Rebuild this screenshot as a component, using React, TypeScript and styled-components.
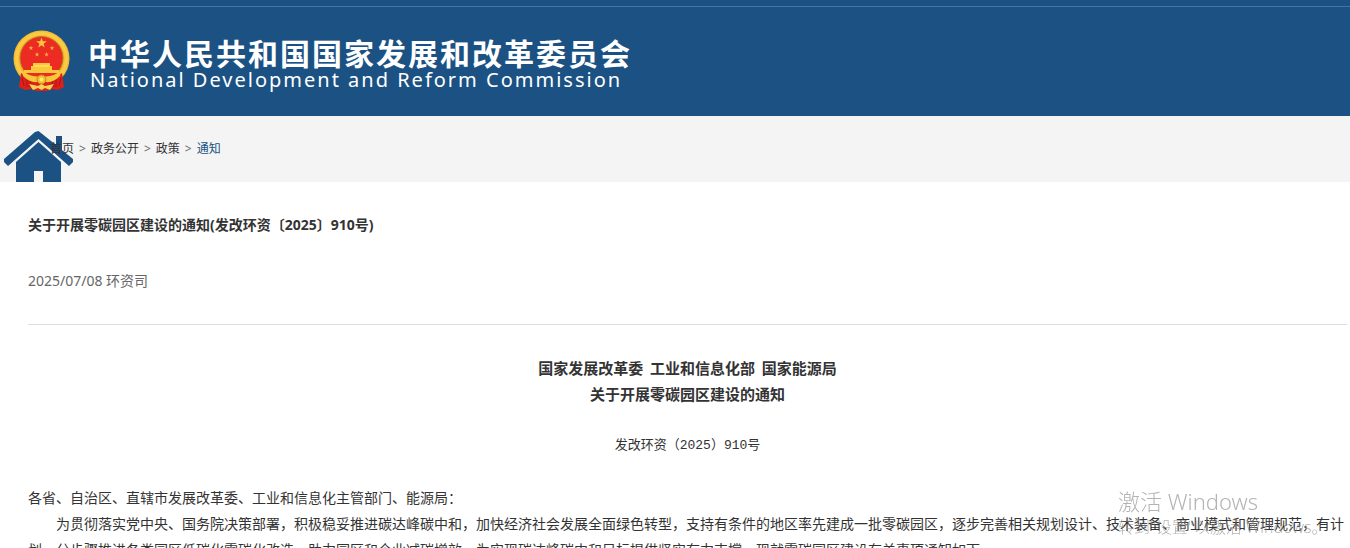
import React from "react";
import styled, { createGlobalStyle } from "styled-components";

const sans = `"Noto Sans", "Noto Sans CJK SC", sans-serif`;
const song = `"Noto Sans CJK SC", sans-serif`;

const GlobalStyle = createGlobalStyle`
  * { box-sizing: border-box; }
  body { margin: 0; background: #fff; color: #333; font-family: ${sans}; }
  h1, h2, p { margin: 0; }
`;

const Page = styled.div`
  overflow: hidden;
`;

const Header = styled.header`
  background: #1b5283;
  padding-top: 6px;
`;

const HeaderInner = styled.div`
  display: flex;
  align-items: flex-start;
  gap: 17px;
  height: 110px;
  padding: 23px 13px 0;
  border-top: 1px solid #45749e;
`;

const SiteName = styled.div`
  color: #fff;
  padding-top: 4px;
  white-space: nowrap;
`;

const ChineseName = styled.div`
  font: 700 30px/36px "Noto Sans CJK SC", sans-serif;
  letter-spacing: 2px;
`;

const EnglishName = styled.div`
  padding-left: 2px;
  font: 400 20px/20px "Noto Sans", sans-serif;
  letter-spacing: 2px;
`;

const Breadcrumb = styled.nav`
  position: relative;
  height: 66px;
  padding: 23px 0 0 50px;
  overflow: hidden;
  background: #f4f4f4;
  font-size: 12px;
  line-height: 20px;
`;

const HomeIcon = styled.svg`
  position: absolute;
  left: 4px;
  top: 15px;
`;

const Crumbs = styled.ol`
  position: relative;
  display: flex;
  gap: 5px;
  margin: 0;
  padding: 0;
  list-style: none;
`;

const Crumb = styled.li`
  display: flex;
  gap: 5px;
  color: #666;
  &:not(:last-child)::after { content: ">"; }
`;

const CrumbLink = styled.a<{ $current?: boolean }>`
  color: ${(p) => (p.$current ? "#1b5283" : "#333")};
  text-decoration: none;
`;

const Article = styled.main`
  padding: 31px 3px 0 28px;
`;

const Title = styled.h1`
  font-size: 14px;
  line-height: 24px;
  font-weight: 700;
`;

const Meta = styled.p`
  margin-top: 32px;
  padding-bottom: 31px;
  border-bottom: 1px solid #ddd;
  color: #666;
  font-size: 14px;
  line-height: 24px;
`;

const DocumentHead = styled.h2`
  margin-top: 30px;
  text-align: center;
  font: 700 15px/26px ${song};
`;

const DocumentNumber = styled.p`
  margin-top: 26px;
  text-align: center;
  font: 400 13px/26px "Liberation Mono", "Noto Sans CJK SC", monospace;
`;

const Paragraph = styled.p<{ $indent?: boolean }>`
  font: 400 14px/26px ${song};
  text-indent: ${(p) => (p.$indent ? "2em" : "0")};
`;

const Content = styled.div`
  margin-top: 25px;
`;

const Watermark = styled.div`
  position: fixed;
  right: 20px;
  bottom: 9px;
  width: 212px;
  color: rgba(140, 140, 140, 0.65);
  font-weight: 300;
  white-space: nowrap;
  pointer-events: none;
`;

const WatermarkTitle = styled.div`
  font-size: 22px;
  line-height: 28px;
`;

const WatermarkHint = styled.div`
  font-size: 16px;
  line-height: 24px;
`;

const star = (cx: number, cy: number, r: number) =>
  Array.from({ length: 10 }, (_, i) => {
    const a = (Math.PI * i) / 5 - Math.PI / 2;
    const d = i % 2 ? r * 0.4 : r;
    return `${cx + d * Math.cos(a)},${cy + d * Math.sin(a)}`;
  }).join(" ");

const Emblem = () => (
  <svg width="58" height="62" viewBox="0 0 58 62" role="img" aria-label="国徽">
    <circle cx="28.5" cy="28.5" r="28" fill="#f5bd34" />
    <circle cx="28.5" cy="28.5" r="25" fill="none" stroke="#fbcb45" strokeWidth="3" />
    <circle cx="28.5" cy="28" r="21.5" fill="#ec2c22" stroke="#b97b1c" />
    <polygon points={star(28.5, 13, 5.5)} fill="#f9c83c" />
    <polygon points={star(18, 18, 2.4)} fill="#f3b537" />
    <polygon points={star(39, 18, 2.4)} fill="#f3b537" />
    <polygon points={star(24, 24.5, 2.4)} fill="#f3b537" />
    <polygon points={star(33.5, 24.5, 2.4)} fill="#f3b537" />
    <path d="M20 33h17v3h2v4h7v3H11v-3h7v-4h2z" fill="#f9c83c" />
    <path d="M21 36h15" stroke="#fff06d" />
    <path d="M8 43 14 47h29l6-4 2 14-6 3-6-1-5 2H23l-5-2-6 1-6-3z" fill="#dd2019" />
    <path d="M14 49v8M18 51l-2 6M43 49v8M39 51l2 6M9 48l2 8M48 48l-2 8" stroke="#a91712" />
    <path d="M9 41q9 7 19.5 5Q39 48 48 41l-1 5q-7 7-14 6l-4.5-2-4.5 2q-7 1-14-6z" fill="#f6c63c" />
    <circle cx="28.5" cy="49.5" r="4.5" fill="#f4bd32" stroke="#c88520" />
    <circle cx="28.5" cy="49.5" r="2" fill="#ffe96a" />
    <path d="m16 54 9 2 3.5-2 3.5 2 9-2-4 6-5-2-3.5 2-3.5-2-5 2z" fill="#f8d253" />
  </svg>
);

const Home = () => (
  <HomeIcon width="70" height="54" viewBox="0 0 70 54" aria-hidden="true">
    <path d="M34.5 0 52 14V5h6v14l11 9v3l-4 4L34.5 8 4 35l-4-4v-3L31 1z" fill="#1b5283" />
    <path d="M12 31 34.5 11 57 31v23H39V40h-9v14H12z" fill="#1b5283" />
  </HomeIcon>
);

const crumbs = ["首页", "政务公开", "政策", "通知"];

export default function App() {
  return (
    <Page>
      <GlobalStyle />
      <Header>
        <HeaderInner>
          <Emblem />
          <SiteName>
            <ChineseName>中华人民共和国国家发展和改革委员会</ChineseName>
            <EnglishName>National Development and Reform Commission</EnglishName>
          </SiteName>
        </HeaderInner>
      </Header>
      <Breadcrumb aria-label="当前位置">
        <Home />
        <Crumbs>
          {crumbs.map((name, i) => (
            <Crumb key={name}>
              <CrumbLink href="#" $current={i === crumbs.length - 1}>{name}</CrumbLink>
            </Crumb>
          ))}
        </Crumbs>
      </Breadcrumb>
      <Article>
        <Title>关于开展零碳园区建设的通知(发改环资〔2025〕910号)</Title>
        <Meta>2025/07/08 环资司</Meta>
        <DocumentHead>
          国家发展改革委&nbsp; 工业和信息化部&nbsp; 国家能源局
          <br />
          关于开展零碳园区建设的通知
        </DocumentHead>
        <DocumentNumber>发改环资（2025）910号</DocumentNumber>
        <Content>
          <Paragraph>各省、自治区、直辖市发展改革委、工业和信息化主管部门、能源局：</Paragraph>
          <Paragraph $indent>
            为贯彻落实党中央、国务院决策部署，积极稳妥推进碳达峰碳中和，加快经济社会发展全面绿色转型，支持有条件的地区率先建成一批零碳园区，逐步完善相关规划设计、技术装备、商业模式和管理规范，有计划、分步骤推进各类园区低碳化零碳化改造，助力园区和企业减碳增效，为实现碳达峰碳中和目标提供坚实有力支撑，现就零碳园区建设有关事项通知如下。
          </Paragraph>
        </Content>
      </Article>
      <Watermark>
        <WatermarkTitle>激活 Windows</WatermarkTitle>
        <WatermarkHint>转到"设置"以激活 Windows。</WatermarkHint>
      </Watermark>
    </Page>
  );
}
